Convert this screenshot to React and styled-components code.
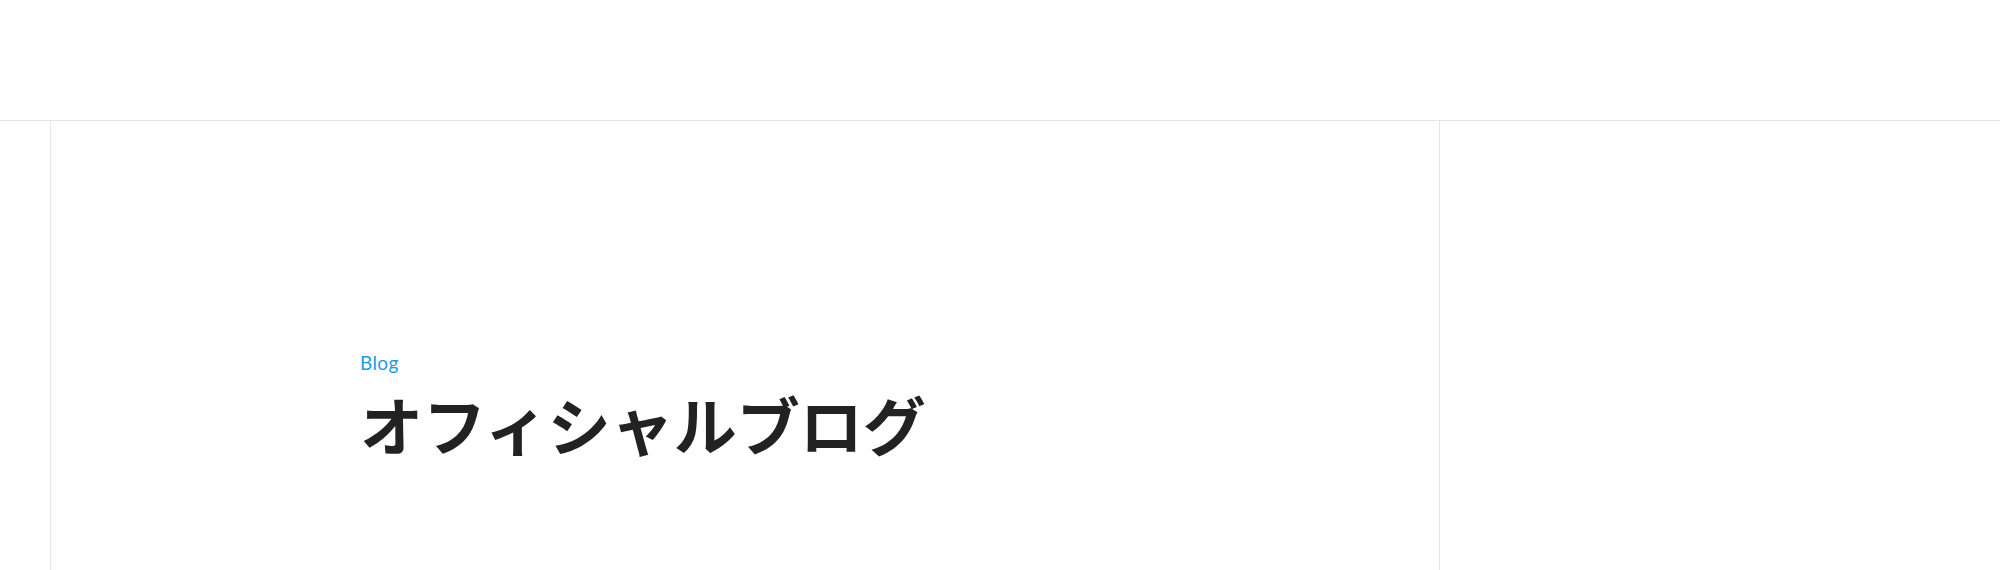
import styled, { createGlobalStyle } from 'styled-components'

const GlobalStyle = createGlobalStyle`
  html, body {
    margin: 0;
    padding: 0;
    background: #ffffff;
  }
  body {
    font-family: "Noto Sans CJK JP", "Noto Sans", sans-serif;
    color: #222222;
  }
`;

const Header = styled.header`
  height: 120px;
  border-bottom: 1px solid #e6e6e6;
`;

const Body = styled.div`
  display: flex;
  min-height: 449px;
  padding-left: 50px;
`;

const Main = styled.main`
  flex: 0 0 1390px;
  box-sizing: border-box;
  border-left: 1px solid #e6e6e6;
  border-right: 1px solid #e6e6e6;
  padding: 232px 0 0 309px;
`;

const Side = styled.aside`
  flex: 1;
`;

const Eyebrow = styled.p`
  margin: 0;
  font-family: "Lato", "Noto Sans", sans-serif;
  font-size: 19px;
  line-height: 1;
  letter-spacing: 0.02em;
  color: #239bd9;
`;

const Title = styled.h1`
  margin: 13px 0 0;
  font-family: "Noto Sans CJK JP", sans-serif;
  font-weight: 700;
  font-size: 63px;
  line-height: 1.2;
  color: #222222;
`;

export default function App() {
  return (
    <>
      <GlobalStyle />
      <Header />
      <Body>
        <Main>
          <Eyebrow>Blog</Eyebrow>
          <Title>オフィシャルブログ</Title>
        </Main>
        <Side />
      </Body>
    </>
  );
}
